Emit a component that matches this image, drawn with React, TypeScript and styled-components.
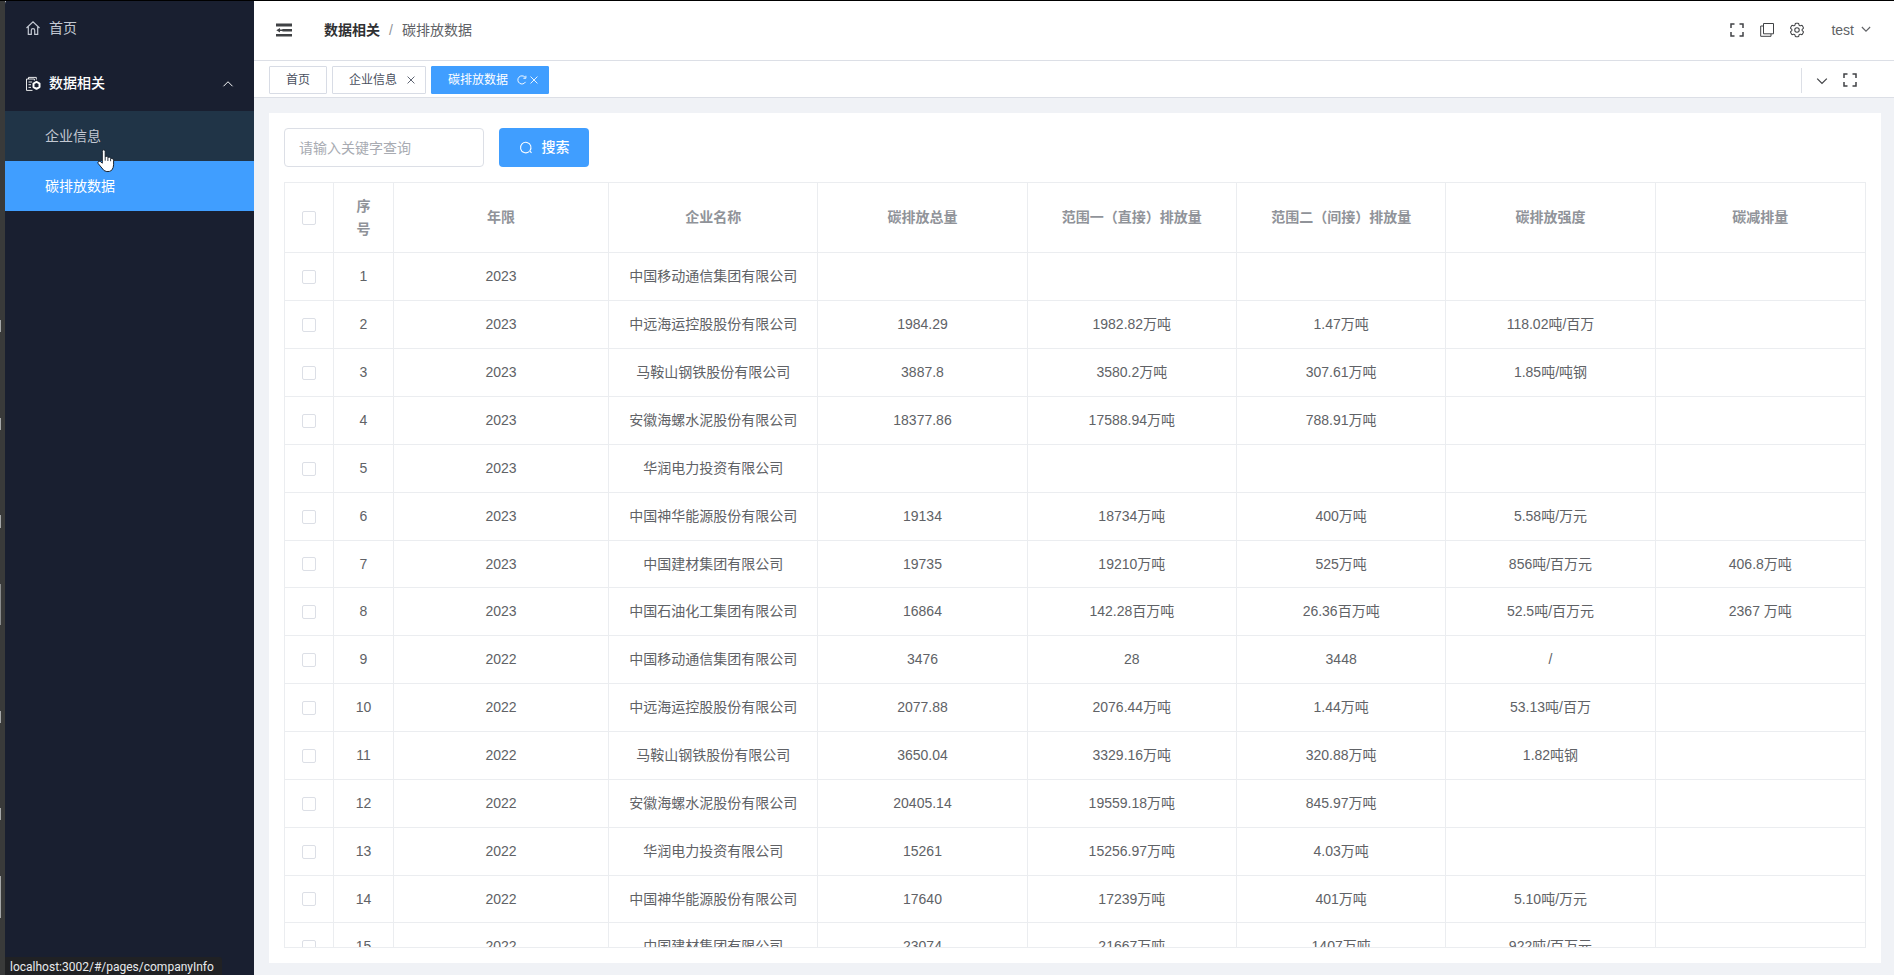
import React from "react";
import styled, { createGlobalStyle, css } from "styled-components";
import { HiOutlineCog6Tooth } from "react-icons/hi2";

const GlobalStyle = createGlobalStyle`
  *, *::before, *::after { box-sizing: border-box; }
  body {
    margin: 0;
    overflow: hidden;
    color: #606266;
    background: #f0f2f6;
    font-family: "Liberation Sans", "Noto Sans CJK SC", sans-serif;
    font-size: 14px;
    line-height: 23px;
  }
  button, input { font: inherit; color: inherit; }
  button { padding: 0; border: 0; background: none; cursor: pointer; }
  a { color: inherit; text-decoration: none; }
`;

const Shell = styled.div`
  display: flex;
  height: 100vh;
  &::before {
    content: "";
    position: fixed;
    z-index: 3;
    top: 0;
    left: 0;
    right: 0;
    height: 1px;
    background: #000;
  }
`;

const WindowEdge = styled.div`
  flex: 0 0 5px;
  background:
    linear-gradient(
      transparent 320px, #a5a7a8 320px 332px, transparent 332px 418px,
      #a5a7a8 418px 430px, transparent 430px 515px, #a5a7a8 515px 528px,
      transparent 528px 584px, #8a8c8d 584px 625px, transparent 625px 711px,
      #a5a7a8 711px 723px, transparent 723px 808px, #a5a7a8 808px 820px,
      transparent 820px 876px, #a5a7a8 876px 918px, transparent 918px
    ) 0 0 / 1px 100% no-repeat,
    #393a3a;
`;

const Sidebar = styled.nav`
  flex: 0 0 249px;
  background: #191f30;
  border-top-left-radius: 4px;
  color: #c3c8d2;
`;

const menuRow = css`
  display: flex;
  align-items: center;
  gap: 8px;
  width: 100%;
  height: 56px;
  padding: 0 20px;
  svg { flex: none; }
`;
const MenuLink = styled.a`${menuRow}`;
const MenuGroup = styled.button`
  ${menuRow}
  height: 55px;
  color: #fff;
  text-align: left;
  font-weight: 500;
  span { flex: 1; }
`;
const SubLink = styled.a<{ $state: "hover" | "active" }>`
  display: flex;
  align-items: center;
  height: 50px;
  padding: 0 40px;
  color: ${(p) => (p.$state === "active" ? "#fff" : "#c3c8d2")};
  background: ${(p) => (p.$state === "active" ? "#409eff" : "#203447")};
`;

const Column = styled.div`
  flex: 1;
  min-width: 0;
  display: flex;
  flex-direction: column;
`;

const Header = styled.header`
  flex: none;
  display: flex;
  align-items: center;
  height: 61px;
  padding: 0 22px 0 21px;
  background: #fff;
  border-bottom: 1px solid #dcdfe6;
`;
const IconButton = styled.button`
  display: flex;
  align-items: center;
  justify-content: center;
  width: 18px;
  height: 18px;
  color: #404245;
`;
const Breadcrumb = styled.nav`
  display: flex;
  gap: 9px;
  margin-left: 31px;
  a { color: #303133; font-weight: 700; }
  i { font-style: normal; color: #909399; }
`;
const HeaderTools = styled.div`
  display: flex;
  align-items: center;
  gap: 12px;
  margin-left: auto;
`;
const UserButton = styled.button`
  display: flex;
  align-items: center;
  gap: 6px;
  margin-left: 13px;
`;

const TabBar = styled.div`
  flex: none;
  display: flex;
  align-items: center;
  gap: 5px;
  height: 37px;
  padding: 2px 35px 0 15px;
  background: #fff;
  border-bottom: 1px solid #dcdfe6;
`;
const Tab = styled.div<{ $active?: boolean; $closable?: boolean }>`
  display: flex;
  align-items: center;
  gap: 9px;
  height: 28px;
  padding: 0 ${(p) => (p.$closable ? 9 : 16)}px 0 16px;
  border: 1px solid ${(p) => (p.$active ? "#409eff" : "#d8dce5")};
  border-radius: 1px;
  background: ${(p) => (p.$active ? "#409eff" : "#fff")};
  color: ${(p) => (p.$active ? "#fff" : "#495060")};
  font-size: 12px;
`;
const TabActions = styled.span`
  display: flex;
  gap: 2px;
`;
const TabIcon = styled.button`
  display: flex;
`;
const TabTools = styled.div`
  display: flex;
  align-items: center;
  gap: 10px;
  height: 25px;
  margin-left: auto;
  padding-left: 11px;
  border-left: 1px solid #dcdfe6;
`;

const Main = styled.main`
  flex: 1;
  min-height: 0;
  display: flex;
  padding: 15px 13px 12px 15px;
`;
const Card = styled.section`
  flex: 1;
  min-width: 0;
  display: flex;
  flex-direction: column;
  gap: 15px;
  padding: 15px;
  background: #fff;
`;
const SearchForm = styled.form`
  display: flex;
  gap: 15px;
`;
const SearchInput = styled.input`
  width: 200px;
  height: 39px;
  padding: 0 14px;
  border: 1px solid #dcdfe6;
  border-radius: 4px;
  outline: 0;
  &::placeholder { color: #a8abb2; opacity: 1; }
`;
const SearchButton = styled.button`
  display: flex;
  align-items: center;
  justify-content: center;
  gap: 9px;
  width: 90px;
  height: 39px;
  border-radius: 4px;
  background: #409eff;
  color: #fff;
  font-weight: 500;
`;

const TableFrame = styled.div`
  flex: 1;
  min-height: 0;
  overflow: hidden;
  border: 1px solid #ebedf0;
`;
const Table = styled.table`
  width: 100%;
  table-layout: fixed;
  border-collapse: separate;
  border-spacing: 0;
  text-align: center;
`;
const Col = styled.col<{ $width?: number }>`
  width: ${(p) => (p.$width ? `${p.$width}px` : "auto")};
`;
const cell = css`
  padding: 0 20px;
  border-right: 1px solid #ebedf0;
  border-bottom: 1px solid #ebedf0;
  &:first-child { padding: 0; }
  &:last-child { border-right: 0; }
`;
const HeadCell = styled.th`
  ${cell}
  height: 70px;
  color: #909399;
`;
const Row = styled.tr`
  height: 48px;
  &:nth-child(7n) { height: 47px; }
`;
const Cell = styled.td`${cell}`;
const Checkbox = styled.input`
  appearance: none;
  display: block;
  width: 14px;
  height: 14px;
  margin: 0 auto;
  border: 1px solid #dcdfe6;
  border-radius: 2px;
  background: #fff;
`;

const StatusBar = styled.div`
  position: fixed;
  left: 5px;
  bottom: 0;
  height: 18px;
  padding: 0 8px 0 5px;
  background: #202124;
  color: #e8eaed;
  font: 12px/20px Roboto, "Noto Sans", sans-serif;
  border-top-right-radius: 3px;
`;
const Pointer = styled.svg`
  position: fixed;
  z-index: 4;
  left: 97px;
  top: 148px;
`;

const Stroke = ({ size = 16, w = 1, d }: { size?: number; w?: number; d: string }) => (
  <svg width={size} height={size} viewBox="0 0 16 16" fill="none" stroke="currentColor" strokeWidth={w} aria-hidden="true">
    <path d={d} />
  </svg>
);
const HomeIcon = () => (
  <Stroke w={1.2} d="M1.5 8 8 1.8 14.5 8M3.3 6.5v7.8h3V10.2q0-1.6 1.7-1.6t1.7 1.6v4.1h3V6.5" />
);
const DataIcon = () => (
  <svg width="16" height="16" viewBox="0 0 16 16" fill="none" stroke="currentColor" aria-hidden="true">
    <path d="M3.5 3V1.4h7.8v2.2M7.5 14.4H1.5V3H9.4v1.5M3.5 6h3.6M3.5 8.7h2.5M3.5 11.4h2.5" strokeWidth=".9" />
    <path d="m11.5 5.8 3 1.7v3.6l-3 1.7-3-1.7V7.5z" strokeWidth="2" strokeLinejoin="round" />
  </svg>
);
const FoldIcon = () => (
  <svg width="18" height="18" viewBox="0 0 18 18" fill="currentColor" aria-hidden="true">
    <path d="M1 2.6h16v2.8H1zM7.4 8H17v2.4H7.4zM1 13h16v2.6H1zM1.3 9.2 5 6.9v1.5h2.4v1.7H5v1.5z" />
  </svg>
);
const FullscreenIcon = () => <Stroke w={1.5} d="M2 6V2h3.5M10.5 2H14v4M14 10v4h-3.5M5.5 14H2v-4" />;
const CopyIcon = () => <Stroke w={1} d="M4.5 1.5h10v10.3h-10zM4 4H1.7v10.3H12V12" />;
const CloseIcon = () => <Stroke size={10} w={1.4} d="m2.5 2.5 11 11m0-11-11 11" />;
const RefreshIcon = () => <Stroke size={10} w={1.5} d="M13.6 11A6.5 6.5 0 1 1 12.8 3.6M14.2 1.2v4h-4" />;

const columns = ["序号", "年限", "企业名称", "碳排放总量", "范围一（直接）排放量", "范围二（间接）排放量", "碳排放强度", "碳减排量"];

const rows: string[][] = [
  ["2023", "中国移动通信集团有限公司", "", "", "", "", ""],
  ["2023", "中远海运控股股份有限公司", "1984.29", "1982.82万吨", "1.47万吨", "118.02吨/百万", ""],
  ["2023", "马鞍山钢铁股份有限公司", "3887.8", "3580.2万吨", "307.61万吨", "1.85吨/吨钢", ""],
  ["2023", "安徽海螺水泥股份有限公司", "18377.86", "17588.94万吨", "788.91万吨", "", ""],
  ["2023", "华润电力投资有限公司", "", "", "", "", ""],
  ["2023", "中国神华能源股份有限公司", "19134", "18734万吨", "400万吨", "5.58吨/万元", ""],
  ["2023", "中国建材集团有限公司", "19735", "19210万吨", "525万吨", "856吨/百万元", "406.8万吨"],
  ["2023", "中国石油化工集团有限公司", "16864", "142.28百万吨", "26.36百万吨", "52.5吨/百万元", "2367 万吨"],
  ["2022", "中国移动通信集团有限公司", "3476", "28", "3448", "/", ""],
  ["2022", "中远海运控股股份有限公司", "2077.88", "2076.44万吨", "1.44万吨", "53.13吨/百万", ""],
  ["2022", "马鞍山钢铁股份有限公司", "3650.04", "3329.16万吨", "320.88万吨", "1.82吨钢", ""],
  ["2022", "安徽海螺水泥股份有限公司", "20405.14", "19559.18万吨", "845.97万吨", "", ""],
  ["2022", "华润电力投资有限公司", "15261", "15256.97万吨", "4.03万吨", "", ""],
  ["2022", "中国神华能源股份有限公司", "17640", "17239万吨", "401万吨", "5.10吨/万元", ""],
  ["2022", "中国建材集团有限公司", "23074", "21667万吨", "1407万吨", "922吨/百万元", ""],
];

export default function App() {
  return (
    <>
      <GlobalStyle />
      <Shell>
        <WindowEdge />
        <Sidebar aria-label="菜单">
          <MenuLink href="#/"><HomeIcon />首页</MenuLink>
          <MenuGroup type="button" aria-expanded="true">
            <DataIcon />
            <span>数据相关</span>
            <Stroke size={12} w={1.3} d="m2 11 6-6 6 6" />
          </MenuGroup>
          <SubLink $state="hover" href="#/pages/companyInfo">企业信息</SubLink>
          <SubLink $state="active" href="#/pages/carbonData">碳排放数据</SubLink>
        </Sidebar>
        <Column>
          <Header>
            <IconButton type="button" aria-label="折叠菜单"><FoldIcon /></IconButton>
            <Breadcrumb aria-label="位置">
              <a href="#/pages">数据相关</a>
              <i>/</i>
              <span>碳排放数据</span>
            </Breadcrumb>
            <HeaderTools>
              <IconButton type="button" aria-label="全屏"><FullscreenIcon /></IconButton>
              <IconButton type="button" aria-label="复制"><CopyIcon /></IconButton>
              <IconButton type="button" aria-label="设置"><HiOutlineCog6Tooth size={20} strokeWidth={1.4} /></IconButton>
              <UserButton type="button">test <Stroke size={12} w={1.5} d="m2.5 4 5.5 5.5L13.5 4" /></UserButton>
            </HeaderTools>
          </Header>
          <TabBar>
            <Tab><a href="#/">首页</a></Tab>
            <Tab $closable>
              <a href="#/pages/companyInfo">企业信息</a>
              <TabIcon type="button" aria-label="关闭"><CloseIcon /></TabIcon>
            </Tab>
            <Tab $active $closable>
              <a href="#/pages/carbonData">碳排放数据</a>
              <TabActions>
                <TabIcon type="button" aria-label="刷新"><RefreshIcon /></TabIcon>
                <TabIcon type="button" aria-label="关闭"><CloseIcon /></TabIcon>
              </TabActions>
            </Tab>
            <TabTools>
              <IconButton type="button" aria-label="更多"><Stroke size={14} w={1.4} d="m2.5 6.5 5.5 5.5 5.5-5.5" /></IconButton>
              <IconButton type="button" aria-label="内容全屏"><FullscreenIcon /></IconButton>
            </TabTools>
          </TabBar>
          <Main>
            <Card>
              <SearchForm onSubmit={(e) => e.preventDefault()}>
                <SearchInput type="text" aria-label="关键字" placeholder="请输入关键字查询" />
                <SearchButton type="submit">
                  <Stroke size={14} w={1.2} d="M11.6 12.1A6 6 0 1 1 12.3 11.4L14.3 13.6" />
                  搜索
                </SearchButton>
              </SearchForm>
              <TableFrame>
                <Table>
                  <colgroup>
                    <Col $width={49} />
                    <Col $width={60} />
                    <Col $width={215} />
                    {columns.slice(2).map((c) => <Col key={c} />)}
                  </colgroup>
                  <thead>
                    <tr>
                      <HeadCell><Checkbox type="checkbox" aria-label="全选" /></HeadCell>
                      {columns.map((c) => <HeadCell key={c} scope="col">{c}</HeadCell>)}
                    </tr>
                  </thead>
                  <tbody>
                    {rows.map((row, i) => (
                      <Row key={i}>
                        <Cell><Checkbox type="checkbox" aria-label={`选择第${i + 1}行`} /></Cell>
                        <Cell>{i + 1}</Cell>
                        {row.map((value, j) => <Cell key={j}>{value}</Cell>)}
                      </Row>
                    ))}
                  </tbody>
                </Table>
              </TableFrame>
            </Card>
          </Main>
        </Column>
      </Shell>
      <StatusBar>localhost:3002/#/pages/companyInfo</StatusBar>
      <Pointer width="20" height="26" viewBox="0 0 20 26" aria-hidden="true">
        <path
          d="M5.3 3.3q0-1.5 1.4-1.5t1.5 1.5v5.2q2-.8 2.7.8 2-.6 2.7.9 2.6-.4 3 2v4.6q0 3-2 5.6-1.8 1.4-4.8 1.2-3-.2-4.9-3.6L1.2 15.6q-.9-1.9.6-2.4 1.2-.3 2.2.8l1.3 1.2z"
          fill="#fff" stroke="#17202b" strokeWidth="1"
        />
        <path d="M8.2 8.4v4.3M10.9 9.6V13M13.6 10.5v2.7" fill="none" stroke="#17202b" strokeWidth=".9" />
      </Pointer>
    </>
  );
}
